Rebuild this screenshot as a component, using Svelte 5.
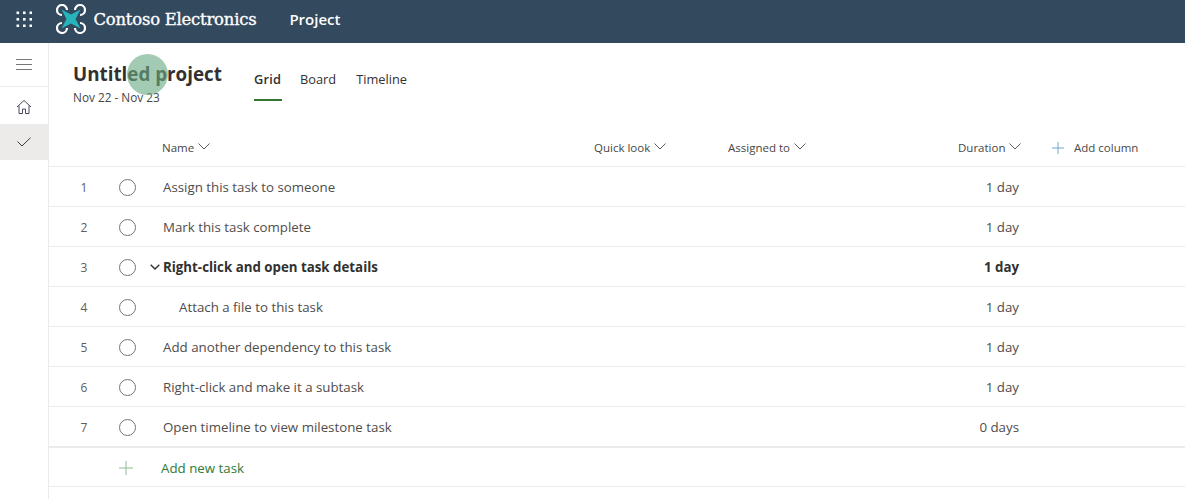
<script>
  const tasks = [
    { id: 1, name: 'Assign this task to someone', duration: '1 day' },
    { id: 2, name: 'Mark this task complete', duration: '1 day' },
    { id: 3, name: 'Right-click and open task details', duration: '1 day', parent: true },
    { id: 4, name: 'Attach a file to this task', duration: '1 day', child: true },
    { id: 5, name: 'Add another dependency to this task', duration: '1 day' },
    { id: 6, name: 'Right-click and make it a subtask', duration: '1 day' },
    { id: 7, name: 'Open timeline to view milestone task', duration: '0 days' }
  ];
  const dots = [0, 1, 2];
</script>

<div class="app">
  <header class="topbar">
    <div class="waffle">
      <svg width="16" height="16" viewBox="0 0 16 16">
        {#each dots as r}
          {#each dots as c}
            <rect x={c * 6.5 + 0.5} y={r * 6.5 + 0.5} width="2.6" height="2.6" fill="#fff" />
          {/each}
        {/each}
      </svg>
    </div>
    <svg class="logo" width="30" height="30" viewBox="0 0 30 30">
      <g fill="none" stroke="#fff" stroke-width="2.2">
        <path d="M11 6 A5 5 0 1 0 6 11" />
        <path d="M19 6 A5 5 0 1 1 24 11" />
        <path d="M11 24 A5 5 0 1 1 6 19" />
        <path d="M19 24 A5 5 0 1 0 24 19" />
      </g>
      <path d="M5.5 5.5 L15 10.5 L24.5 5.5 L19.5 15 L24.5 24.5 L15 19.5 L5.5 24.5 L10.5 15 Z" fill="#27b5bd" />
    </svg>
    <span class="brand">Contoso Electronics</span>
    <span class="app-name">Project</span>
  </header>

  <div class="body">
    <nav class="rail">
      <div class="rail-item menu">
        <svg width="16" height="11" viewBox="0 0 16 11"><path d="M0 .5h16M0 5.5h16M0 10.5h16" stroke="#777" fill="none" /></svg>
      </div>
      <div class="rail-item home">
        <svg width="16" height="16" viewBox="0 0 16 16"><path d="M1 8 L8 1.5 L15 8 M3 6.5 V14.5 H6.5 V10 H9.5 V14.5 H13 V6.5" stroke="#4c4a5c" fill="none" /></svg>
      </div>
      <div class="rail-item active">
        <svg width="14" height="10" viewBox="0 0 14 10"><path d="M.5 4.5 L5 9 L13.5 .7" stroke="#3b3a39" fill="none" /></svg>
      </div>
    </nav>

    <main class="content">
      <div class="project-head">
        <div class="title-block">
          <h1>Untitled project</h1>
          <div class="dates">Nov 22 - Nov 23</div>
          <span class="click-ring"></span>
        </div>
        <div class="tabs">
          <span class="tab selected">Grid</span>
          <span class="tab">Board</span>
          <span class="tab">Timeline</span>
        </div>
      </div>

      <div class="grid-head">
        <span class="col-name">Name <svg class="caret" viewBox="0 0 12 7"><path d="M.5 .5 L6 6 L11.5 .5" /></svg></span>
        <span class="col-look">Quick look <svg class="caret" viewBox="0 0 12 7"><path d="M.5 .5 L6 6 L11.5 .5" /></svg></span>
        <span class="col-assigned">Assigned to <svg class="caret" viewBox="0 0 12 7"><path d="M.5 .5 L6 6 L11.5 .5" /></svg></span>
        <span class="col-duration">Duration <svg class="caret" viewBox="0 0 12 7"><path d="M.5 .5 L6 6 L11.5 .5" /></svg></span>
        <span class="col-add">
          <svg width="12" height="12" viewBox="0 0 12 12"><path d="M6 0V12M0 6H12" stroke="#6fa8c9" fill="none" /></svg>
          Add column
        </span>
      </div>

      {#each tasks as task}
        <div class="row" class:last={task.id === 7}>
          <span class="num">{task.id}</span>
          <span class="check"></span>
          <span class="expander">
            {#if task.parent}
              <svg width="10" height="6" viewBox="0 0 10 6"><path d="M.7 .7 L5 5 L9.3 .7" stroke="#323130" stroke-width="1.4" fill="none" /></svg>
            {/if}
          </span>
          <span class="name" class:bold={task.parent} class:child={task.child}>{task.name}</span>
          <span class="duration" class:bold={task.parent}>{task.duration}</span>
        </div>
      {/each}

      <div class="add-row">
        <svg width="14" height="14" viewBox="0 0 14 14"><path d="M7 0V14M0 7H14" stroke="#8dbd94" fill="none" /></svg>
        <span>Add new task</span>
      </div>
    </main>
  </div>
</div>

<style>
  :global(body) {
    margin: 0;
    background: #fff;
    font-family: "Open Sans", "Noto Sans", sans-serif;
    color: #323130;
  }
  .app {
    width: 1185px;
    height: 499px;
    overflow: hidden;
  }
  .topbar {
    height: 43px;
    background: #33495e;
    display: flex;
    align-items: center;
    color: #fff;
  }
  .waffle {
    width: 48px;
    display: flex;
    justify-content: center;
    margin-bottom: 6px;
  }
  .logo {
    margin-left: 7.5px;
    margin-bottom: 5px;
  }
  .brand {
    margin-left: 8px;
    margin-bottom: 5px;
    font-family: "DejaVu Serif", serif;
    font-size: 16.4px;
    letter-spacing: -0.2px;
    -webkit-text-stroke: 0.35px #fff;
  }
  .app-name {
    margin-left: 33px;
    margin-bottom: 5px;
    font-size: 15px;
    font-weight: 600;
  }
  .body {
    display: flex;
    height: 456px;
  }
  .rail {
    width: 49px;
    flex: none;
    border-right: 1px solid #edebe9;
    box-sizing: border-box;
  }
  .rail-item {
    height: 36px;
    display: flex;
    align-items: center;
    justify-content: center;
  }
  .menu {
    height: 44px;
    border-bottom: 1px solid #edebe9;
    box-sizing: border-box;
  }
  .home {
    height: 37px;
    padding-top: 2px;
    box-sizing: border-box;
  }
  .active {
    background: #edebe9;
  }
  .content {
    flex: 1;
    min-width: 0;
  }
  .project-head {
    height: 81px;
    display: flex;
    box-sizing: border-box;
    padding-left: 24px;
  }
  .title-block {
    position: relative;
    width: 181px;
    padding-top: 18px;
  }
  h1 {
    margin: 0;
    font-size: 18.8px;
    line-height: 27px;
    font-weight: 700;
    position: relative;
    z-index: 1;
    white-space: nowrap;
  }
  .dates {
    font-size: 11.8px;
    line-height: 15px;
    margin-top: 2px;
    white-space: nowrap;
    color: #484644;
  }
  .click-ring {
    position: absolute;
    left: 54px;
    top: 11px;
    width: 41px;
    height: 41px;
    border-radius: 50%;
    background: rgba(107, 170, 130, 0.62);
    z-index: 2;
  }
  .tabs {
    display: flex;
    gap: 20px;
    height: 58px;
    align-items: flex-start;
  }
  .tab {
    font-size: 12.8px;
    line-height: 18px;
    padding-top: 27px;
    height: 29px;
  }
  .selected {
    font-weight: 600;
    width: 28px;
    margin-right: -2px;
    letter-spacing: 0.2px;
    border-bottom: 2px solid #31752f;
  }
  .grid-head {
    height: 42px;
    border-bottom: 1px solid #edebe9;
    position: relative;
    font-size: 11.5px;
    line-height: 47px;
    color: #484644;
  }
  .grid-head > span {
    position: absolute;
    top: 0;
    white-space: nowrap;
  }
  .col-name { left: 113px; }
  .col-look { left: 545px; }
  .col-assigned { left: 679px; }
  .col-duration { left: 909px; }
  .col-add { left: 1003px; color: #4a4a4a; }
  .col-add svg { margin-right: 7px; vertical-align: -2px; }
  .caret {
    width: 12px;
    height: 7px;
    margin-left: 1px;
    vertical-align: 2px;
    fill: none;
    stroke: #605e5c;
  }
  .row {
    height: 40px;
    box-sizing: border-box;
    border-bottom: 1px solid #edebe9;
    display: flex;
    align-items: center;
    font-size: 13.3px;
    color: #4f4d4b;
  }
  .row.last {
    border-bottom-width: 2px;
    height: 41px;
  }
  .num {
    width: 24px;
    margin-left: 23px;
    margin-top: 2px;
    text-align: center;
    font-size: 12px;
    color: #605e5c;
    flex: none;
  }
  .check {
    width: 15px;
    height: 15px;
    border: 1px solid #767472;
    border-radius: 50%;
    margin-left: 23px;
    margin-top: 2px;
    flex: none;
  }
  .expander {
    width: 26px;
    text-align: right;
    padding-right: 2px;
    box-sizing: border-box;
    line-height: 0;
    flex: none;
  }
  .name {
    width: 800px;
    box-sizing: border-box;
    white-space: nowrap;
    flex: none;
    padding-left: 1px;
  }
  .child {
    padding-left: 17px;
  }
  .bold {
    font-weight: 700;
    color: #323130;
  }
  .duration {
    width: 57px;
    flex: none;
    text-align: right;
    white-space: nowrap;
  }
  .add-row {
    height: 39px;
    box-sizing: border-box;
    border-bottom: 1px solid #edebe9;
    display: flex;
    align-items: center;
    padding: 2px 0 0 70px;
    gap: 28px;
    font-size: 13.3px;
    color: #2f7a38;
  }
</style>
